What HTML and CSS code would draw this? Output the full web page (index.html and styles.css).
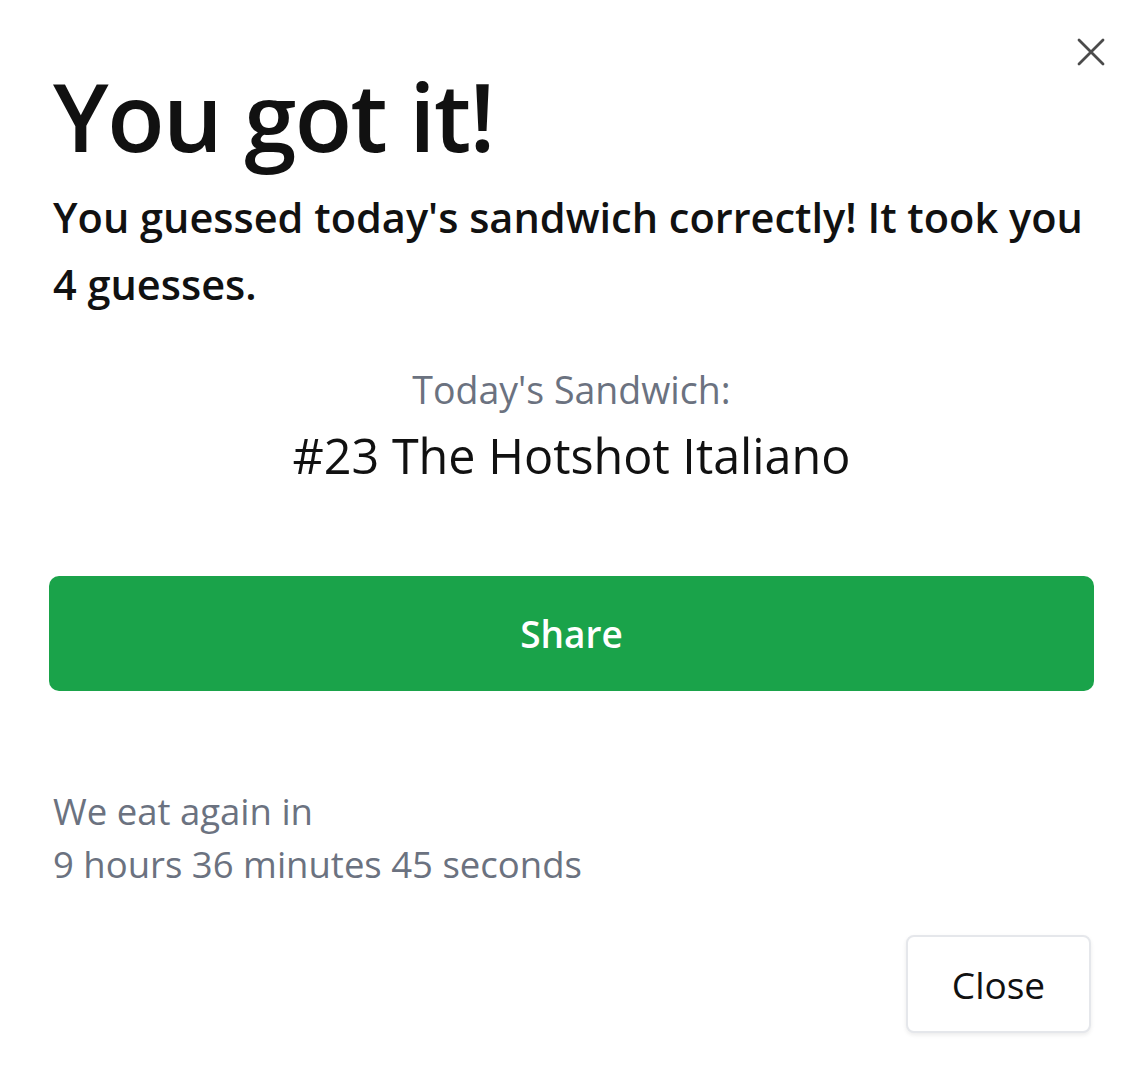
FILE: index.html
```html
<!DOCTYPE html>
<html lang="en">
<head>
<meta charset="utf-8">
<title>You got it!</title>
<link rel="stylesheet" href="styles.css">
</head>
<body>
<div class="modal">
  <button class="close-x" aria-label="Close">
    <svg viewBox="0 0 30 30" width="30" height="30"><path d="M3 3 L27 27 M27 3 L3 27" stroke="#4b4b4b" stroke-width="2.8" stroke-linecap="round" fill="none"/></svg>
  </button>
  <h1 class="title">You got it!</h1>
  <p class="lead">You guessed today's sandwich correctly! It took you 4 guesses.</p>
  <div class="answer">
    <div class="answer-label">Today's Sandwich:</div>
    <div class="answer-name">#23 The Hotshot Italiano</div>
  </div>
  <button class="share">Share</button>
  <div class="countdown">
    <div>We eat again in</div>
    <div>9 hours 36 minutes 45 seconds</div>
  </div>
  <div class="footer">
    <button class="close-btn">Close</button>
  </div>
</div>
</body>
</html>
```
FILE: styles.css
```css
* { box-sizing: border-box; }
html, body { margin: 0; padding: 0; background: #fff; }
body { font-family: "Open Sans", "Noto Sans", sans-serif; color: #111; }
.modal {
  position: relative;
  width: 1135px;
  height: 1080px;
  padding: 56px 41px 0 49px;
}
.close-x {
  position: absolute;
  top: 37px;
  right: 29px;
  width: 30px;
  height: 30px;
  padding: 0;
  border: 0;
  background: none;
}
.close-x svg { display: block; }
.title {
  margin: 0 0 0 4px;
  font-size: 94px;
  font-weight: 600;
  line-height: 120px;
  letter-spacing: -1.5px;
  color: #111;
}
.lead {
  margin: 8px 0 0 4px;
  font-size: 41.5px;
  font-weight: 600;
  line-height: 67px;
  color: #111;
}
.answer {
  margin-top: 42px;
  text-align: center;
}
.answer-label {
  font-size: 37.5px;
  line-height: 60px;
  color: #6b7280;
}
.answer-name {
  font-size: 48.5px;
  font-weight: 500;
  line-height: 70px;
  color: #111;
}
.share {
  display: block;
  width: 100%;
  height: 115px;
  margin-top: 86px;
  border: 0;
  border-radius: 10px;
  background: #1aa34a;
  color: #fff;
  font-family: inherit;
  font-size: 37px;
  font-weight: 600;
}
.countdown {
  margin-top: 94px;
  padding-left: 4px;
  font-size: 36.5px;
  line-height: 53px;
  color: #6b7280;
}
.footer {
  display: flex;
  justify-content: flex-end;
  margin-top: 44px;
  padding-right: 3px;
}
.close-btn {
  width: 185px;
  height: 98px;
  border: 2px solid #e5e7eb;
  border-radius: 8px;
  background: #fff;
  box-shadow: 0 2px 4px rgba(0,0,0,0.08);
  color: #111;
  font-family: inherit;
  font-size: 37px;
  font-weight: 500;
}
```
